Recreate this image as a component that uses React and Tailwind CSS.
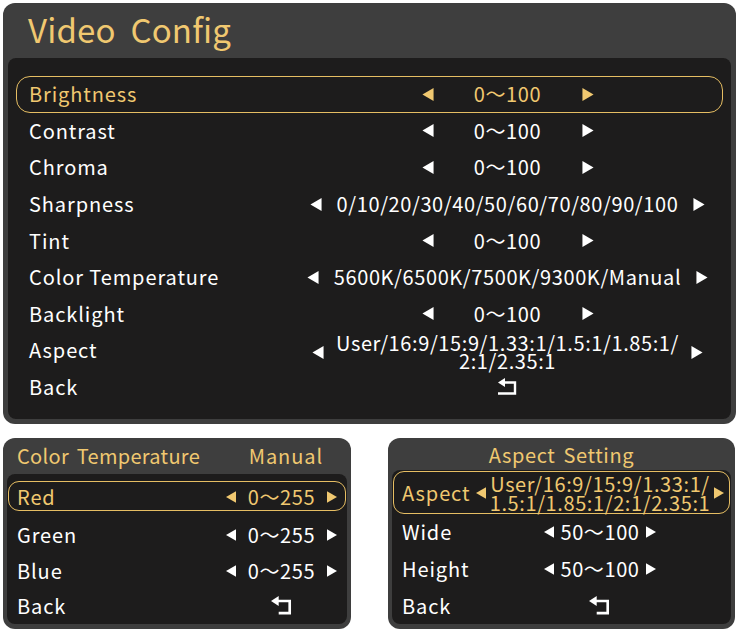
import React from "react";

const mainRows = [
  { label: "Brightness", value: "0～100", active: true },
  { label: "Contrast", value: "0～100" },
  { label: "Chroma", value: "0～100" },
  { label: "Sharpness", value: "0/10/20/30/40/50/60/70/80/90/100" },
  { label: "Tint", value: "0～100" },
  { label: "Color Temperature", value: "5600K/6500K/7500K/9300K/Manual" },
  { label: "Backlight", value: "0～100" },
  { label: "Aspect", value: ["User/16:9/15:9/1.33:1/1.5:1/1.85:1/", "2:1/2.35:1"] },
  { label: "Back", back: true },
];

const Tri = ({ dir, className }) => (
  <svg viewBox="0 0 12 14" className={className} fill="currentColor">
    <path d={dir === "left" ? "M0 7 L12 0 L12 14 Z" : "M12 7 L0 0 L0 14 Z"} />
  </svg>
);

const BackIcon = ({ full, className }) => (
  <svg viewBox="0 0 20 18" className={className} fill="none">
    <path d="M0 4.5 L7 0 L7 9 Z" fill="#fff" />
    <path
      d={full ? "M6 4.5 H17 V15.5 H0" : "M6 4.5 H17 V15.5 H7"}
      stroke="#fff"
      strokeWidth="2.4"
    />
  </svg>
);

const MainRow = ({ row }) => {
  const gold = row.active;
  const multi = Array.isArray(row.value);
  return (
    <div
      className={`grid grid-cols-[276px_1fr] items-center h-[36.6px] rounded-[14px] border-[1.5px] ${
        gold ? "border-[#e6be63] text-[#f0c870]" : "border-transparent text-white"
      }`}
    >
      <div className="pl-[12px] text-[20px] tracking-[0.9px]">{row.label}</div>
      <div className="flex items-center justify-center h-[34px]">
        {row.back ? (
          <BackIcon full className="w-[20px] h-[18px]" />
        ) : (
          <>
            <Tri dir="left" className={`w-[12px] h-[13px] shrink-0 ${multi ? "translate-y-[2px]" : ""}`} />
            <div
              className={`min-w-[118px] text-center tracking-[0.6px] text-[20px] ${
                multi ? "leading-[18px] translate-y-[2px] mx-[12px]" : "mx-[15px]"
              }`}
            >
              {multi ? row.value.map((l) => <div key={l}>{l}</div>) : row.value}
            </div>
            <Tri dir="right" className={`w-[12px] h-[13px] shrink-0 ${multi ? "translate-y-[2px]" : ""}`} />
          </>
        )}
      </div>
    </div>
  );
};

const SmallRow = ({ label, value, active, back, cols, h, gap = "mx-[12px]" }) => {
  const multi = Array.isArray(value);
  return (
    <div
      className={`grid ${cols} items-center ${h} rounded-[11px] border-[1.5px] ${
        active ? "border-[#e6be63] text-[#f0c870]" : "border-transparent text-white"
      }`}
    >
      <div className="pl-[8px] text-[20px] tracking-[0.9px]">{label}</div>
      <div className="flex items-center justify-center">
        {back ? (
          <BackIcon className="w-[22px] h-[20px]" />
        ) : (
          <>
            <Tri dir="left" className="w-[10px] h-[12px] shrink-0" />
            <div
              className={`${gap} text-center tracking-[0.6px] text-[20px] ${
                multi ? "leading-[19px]" : ""
              }`}
            >
              {multi ? value.map((l) => <div key={l}>{l}</div>) : value}
            </div>
            <Tri dir="right" className="w-[10px] h-[12px] shrink-0" />
          </>
        )}
      </div>
    </div>
  );
};

const App = () => {
  return (
    <div className="w-[740px] h-[634px] bg-white pt-[3px] pl-[3px] font-['Noto_Sans_CJK_SC','Noto_Sans',sans-serif]">
      <div className="w-[733px] h-[421px] rounded-[12px] bg-[#3e3e3e] px-[5px] pb-[5px] flex flex-col">
        <div className="h-[55px] flex items-center pl-[20px] pb-[2px] text-[33px] text-[#f0c870] tracking-[0.2px] [word-spacing:7px] leading-none">
          Video Config
        </div>
        <div className="flex-1 rounded-[8px] bg-[#1d1c1c] px-[8px] pt-[18px]">
          {mainRows.map((row) => (
            <MainRow key={row.label} row={row} />
          ))}
        </div>
      </div>

      <div className="flex gap-[37px] mt-[14px]">
        <div className="w-[348px] h-[191px] rounded-[12px] bg-[#3e3e3e] px-[4px] pb-[5px] flex flex-col">
          <div className="h-[36px] flex items-center justify-between pl-[10px] pr-[24px] text-[20px] text-[#f0c870] tracking-[0.3px] [word-spacing:3px]">
            <span>Color Temperature</span>
            <span className="tracking-[0.9px]">Manual</span>
          </div>
          <div className="flex-1 rounded-[8px] bg-[#1d1c1c] px-[1px] pt-[7px]">
            <SmallRow label="Red" value="0～255" active cols="grid-cols-[209px_1fr]" h="h-[30px] mb-[6px]" />
            <SmallRow label="Green" value="0～255" cols="grid-cols-[209px_1fr]" h="h-[36px]" />
            <SmallRow label="Blue" value="0～255" cols="grid-cols-[209px_1fr]" h="h-[36px]" />
            <SmallRow label="Back" back cols="grid-cols-[209px_1fr]" h="h-[34px]" />
          </div>
        </div>

        <div className="w-[347px] h-[191px] rounded-[12px] bg-[#3e3e3e] px-[4px] pb-[5px] flex flex-col">
          <div className="h-[36px] flex items-center justify-center pt-[2px] text-[20px] text-[#f0c870] tracking-[0.6px] [word-spacing:3px]">
            Aspect Setting
          </div>
          <div className="flex-1 rounded-[8px] bg-[#1d1c1c] px-[1px] pt-[1px]">
            <SmallRow
              label="Aspect"
              value={["User/16:9/15:9/1.33:1/", "1.5:1/1.85:1/2:1/2.35:1"]}
              active
              cols="grid-cols-[77px_1fr]"
              h="h-[43px]"
              gap="mx-[4px]"
            />
            <SmallRow label="Wide" value="50～100" cols="grid-cols-[77px_1fr]" h="h-[36px]" gap="mx-[6px]" />
            <SmallRow label="Height" value="50～100" cols="grid-cols-[77px_1fr]" h="h-[38px]" gap="mx-[6px]" />
            <SmallRow label="Back" back cols="grid-cols-[77px_1fr]" h="h-[36px]" />
          </div>
        </div>
      </div>
    </div>
  );
};

export default App;
